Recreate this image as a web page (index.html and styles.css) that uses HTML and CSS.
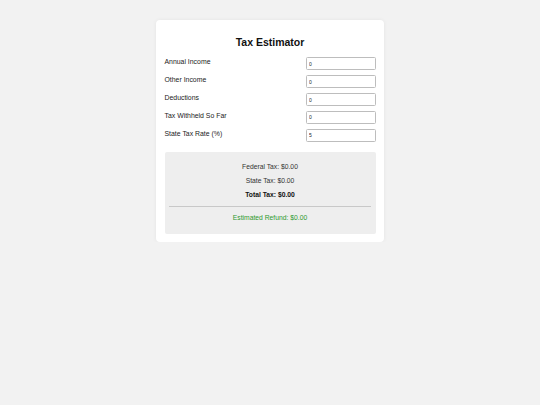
FILE: index.html
```html
<!DOCTYPE html>
<html>
<head>
<meta charset="utf-8">
<link rel="stylesheet" href="styles.css">
</head>
<body>
<div class="card">
  <h2 class="title">Tax Estimator</h2>
  <div class="row"><label>Annual Income</label><input type="number" value="0"></div>
  <div class="row"><label>Other Income</label><input type="number" value="0"></div>
  <div class="row"><label>Deductions</label><input type="number" value="0"></div>
  <div class="row"><label>Tax Withheld So Far</label><input type="number" value="0"></div>
  <div class="row"><label>State Tax Rate (%)</label><input type="number" value="5"></div>
  <div class="results">
    <p class="line">Federal Tax: $0.00</p>
    <p class="line">State Tax: $0.00</p>
    <p class="line total">Total Tax: $0.00</p>
    <p class="refund">Estimated Refund: $0.00</p>
  </div>
</div>
</body>
</html>
```
FILE: styles.css
```css
html, body {
  margin: 0;
  padding: 0;
  background: #f2f2f2;
  font-family: "Liberation Sans", Arial, sans-serif;
}
body {
  padding-top: 20px;
}
.card {
  width: 228px;
  box-sizing: border-box;
  margin: 0 auto;
  background: #fff;
  border-radius: 4px;
  padding: 8.5px;
  box-shadow: 0 0 4px rgba(0, 0, 0, 0.06);
}
.title {
  font-size: 10.5px;
  font-weight: bold;
  text-align: center;
  color: #111;
  margin: 7.3px 0 9.4px;
  line-height: 12px;
}
.row {
  display: flex;
  justify-content: space-between;
  align-items: flex-start;
  margin-bottom: 5.3px;
}
.row label {
  font-size: 6.9px;
  line-height: 8px;
  color: #222;
  padding-top: 0.4px;
}
.row input {
  width: 70px;
  height: 12.7px;
  box-sizing: border-box;
  border: 0.6px solid #bdbdbd;
  border-radius: 1.5px;
  padding: 0 2.5px;
  font-family: "Liberation Sans", Arial, sans-serif;
  font-size: 5px;
  color: #222;
  background: #fff;
  margin: 0;
  outline: none;
  -moz-appearance: textfield;
}
.row input::-webkit-outer-spin-button,
.row input::-webkit-inner-spin-button {
  -webkit-appearance: none;
  margin: 0;
}
.results {
  margin-top: 9.7px;
  background: #eeeeee;
  border-radius: 2px;
  padding: 5px 4.8px;
  text-align: center;
  font-size: 6.75px;
  color: #333;
}
.results .line {
  margin: 6px 0;
  line-height: 8px;
}
.results .line:first-child {
  margin-top: 6px;
}
.results .total {
  font-weight: bold;
  color: #111;
}
.results .refund {
  margin: 7px 0 7px;
  padding-top: 7px;
  border-top: 1px solid #c8c8c8;
  line-height: 8px;
  color: #2e9a2e;
}
```
